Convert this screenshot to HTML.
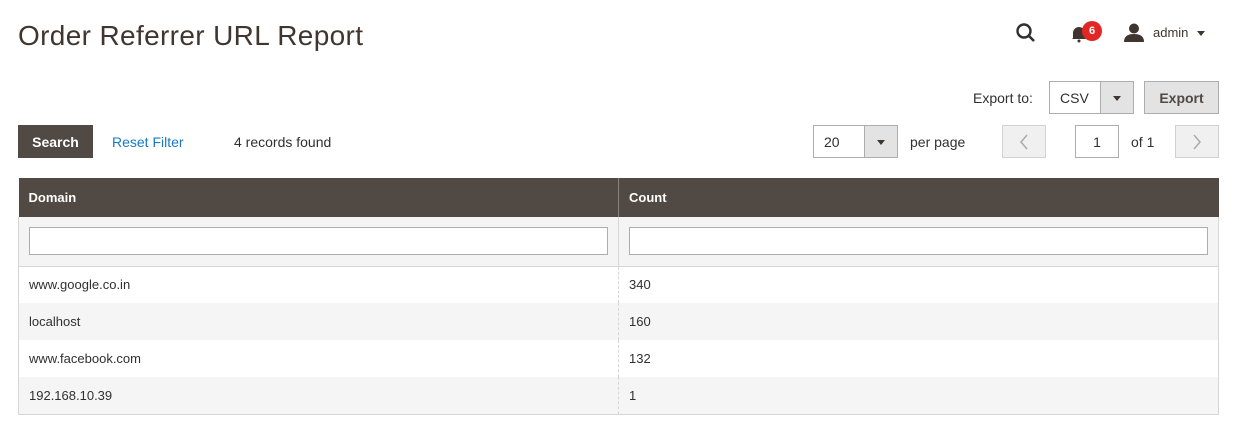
<!DOCTYPE html>
<html><head><style>
*{box-sizing:border-box;margin:0;padding:0}
body{width:1235px;height:434px;background:#fff;font-family:"Liberation Sans",sans-serif;color:#303030;position:relative;overflow:hidden}
.a{position:absolute}
h1{position:absolute;left:18px;top:20px;font-size:28px;font-weight:normal;color:#41362f;letter-spacing:0.35px}
.btn{position:absolute;border:1px solid #adadad;background:#e3e3e3;font-size:14px;display:flex;align-items:center;justify-content:center}
.box{position:absolute;border:1px solid #adadad;background:#fff;font-size:14px}
table{position:absolute;left:18px;top:178px;width:1201px;border-collapse:collapse;font-size:13px}
th{background:#514943;color:#fff;text-align:left;height:39px;padding-left:10px;font-size:13px;border-left:1px solid #8a837f}
th:first-child{border-left:none}
td{height:37px;padding-left:10px;border-left:1px dashed #d6d6d6}
td:first-child{border-left:1px solid #d6d6d6}
tr td:last-child{border-right:1px solid #d6d6d6}
tr.f td{height:49px;background:#f4f4f4;border-left:1px solid #d6d6d6;padding:0 10px;border-bottom:1px solid #d6d6d6}
tr.f input{width:100%;height:28px;border:1px solid #adadad}
tr.g td{background:#f5f5f5}
tr:last-child td{border-bottom:1px solid #d6d6d6}
</style></head><body>
<h1>Order Referrer URL Report</h1>
<svg class="a" style="left:1015px;top:22px" width="22" height="22" viewBox="0 0 22 22"><circle cx="9" cy="9" r="6.5" stroke="#303030" stroke-width="2.4" fill="none"/><path d="M13.5 13.5L19 19" stroke="#303030" stroke-width="2.6"/></svg>
<svg class="a" style="left:1071px;top:25px" width="16" height="18" viewBox="0 0 16 18"><path d="M2 13V8a6 6 0 0112 0v5l1 1H1z" fill="#41362f"/><circle cx="8" cy="16" r="1.5" fill="#41362f"/></svg>
<div class="a" style="left:1082px;top:21px;width:20px;height:20px;border-radius:50%;background:#e22626;color:#fff;font-size:11px;font-weight:bold;text-align:center;line-height:20px">6</div>
<svg class="a" style="left:1124px;top:23px" width="20" height="19" viewBox="0 0 20 19"><circle cx="10" cy="5.5" r="5" fill="#41362f"/><path d="M0 19c0-6 4-8 10-8s10 2 10 8z" fill="#41362f"/></svg>
<div class="a" style="left:1153px;top:25px;font-size:13px;color:#41362f">admin</div>
<div class="a" style="left:1197px;top:31px;border:4px solid transparent;border-top:5px solid #41362f"></div>
<div class="a" style="left:973px;top:90px;font-size:14px">Export to:</div>
<div class="box" style="left:1049px;top:81px;width:85px;height:33px;padding:8px 10px">CSV</div>
<div class="btn" style="left:1100px;top:81px;width:34px;height:33px"><span style="border:4px solid transparent;border-top:5px solid #41362f;margin-top:5px"></span></div>
<div class="btn" style="left:1144px;top:81px;width:75px;height:33px;color:#514943;font-weight:bold">Export</div>
<div class="a" style="left:18px;top:125px;width:75px;height:33px;background:#514943;color:#fff;font-weight:bold;font-size:14px;display:flex;align-items:center;justify-content:center">Search</div>
<div class="a" style="left:112px;top:134px;font-size:14px;color:#1979c3">Reset Filter</div>
<div class="a" style="left:234px;top:134px;font-size:14px">4 records found</div>
<div class="box" style="left:813px;top:125px;width:85px;height:33px;padding:8px 10px">20</div>
<div class="btn" style="left:864px;top:125px;width:34px;height:33px"><span style="border:4px solid transparent;border-top:5px solid #41362f;margin-top:5px"></span></div>
<div class="a" style="left:910px;top:134px;font-size:14px">per page</div>
<div class="btn" style="left:1002px;top:125px;width:44px;height:33px;background:#f0f0f0;border-color:#d1d1d1"><svg width="10" height="16" viewBox="0 0 10 16"><path d="M8 1L2 8l6 7" stroke="#aaa" stroke-width="1.5" fill="none"/></svg></div>
<div class="box" style="left:1075px;top:125px;width:44px;height:33px;text-align:center;padding-top:8px">1</div>
<div class="a" style="left:1131px;top:134px;font-size:14px">of 1</div>
<div class="btn" style="left:1175px;top:125px;width:44px;height:33px;background:#f0f0f0;border-color:#d1d1d1"><svg width="10" height="16" viewBox="0 0 10 16"><path d="M2 1l6 7-6 7" stroke="#aaa" stroke-width="1.5" fill="none"/></svg></div>
<table>
<tr><th style="width:600px">Domain</th><th>Count</th></tr>
<tr class="f"><td><input></td><td><input></td></tr>
<tr><td>www.google.co.in</td><td>340</td></tr>
<tr class="g"><td>localhost</td><td>160</td></tr>
<tr><td>www.facebook.com</td><td>132</td></tr>
<tr class="g"><td>192.168.10.39</td><td>1</td></tr>
</table>
</body></html>
